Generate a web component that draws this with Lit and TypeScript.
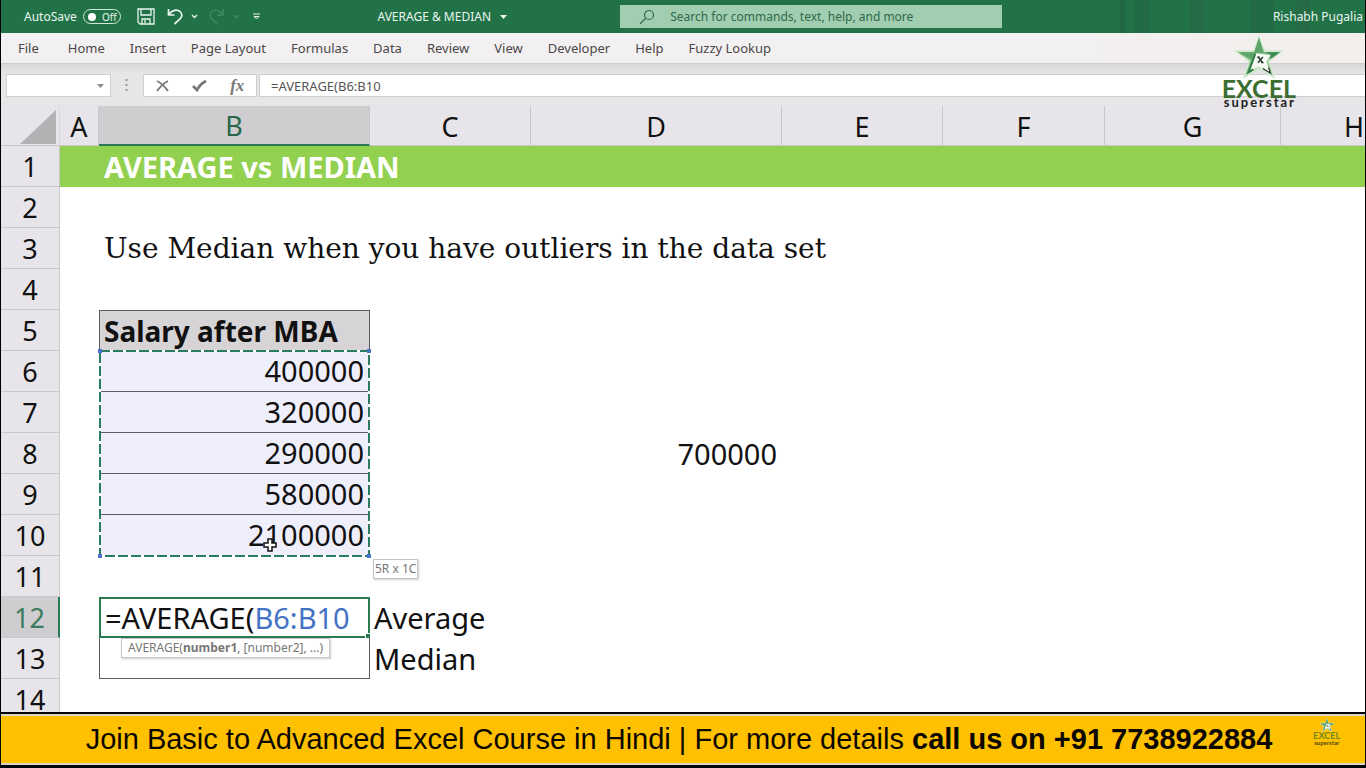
import { LitElement, html, css, svg, nothing } from "lit";
import { customElement, property, state } from "lit/decorators.js";
import { classMap } from "lit/directives/class-map.js";

const TABS = ["File", "Home", "Insert", "Page Layout", "Formulas", "Data", "Review", "View", "Developer", "Help", "Fuzzy Lookup"];
const COLUMNS = ["A", "B", "C", "D", "E", "F", "G", "H"];
const ROWS = Array.from({ length: 14 }, (_, i) => i + 1);
const CELLS: Record<string, string> = {
  B1: "AVERAGE vs MEDIAN",
  B3: "Use Median when you have outliers in the data set",
  B5: "Salary after MBA",
  B6: "400000",
  B7: "320000",
  B8: "290000",
  B9: "580000",
  B10: "2100000",
  D8: "700000",
  C12: "Average",
  C13: "Median",
};

@customElement("brand-logo")
export class BrandLogo extends LitElement {
  @property({ type: Boolean, reflect: true }) small = false;

  static styles = css`
    :host { display: flex; flex-direction: column; align-items: center; font-family: Lato, sans-serif; font-weight: 700; }
    .star { width: 52px; height: 44px; }
    .name { font-size: 25px; line-height: 19px; color: #3c6e31; }
    .sub { font-size: 13px; line-height: 8px; letter-spacing: 2px; color: #222; margin-right: -2px; }
    :host([small]) .star { width: 18px; height: 14px; }
    :host([small]) .name { font-size: 9px; line-height: 8px; color: #718a1c; }
    :host([small]) .sub { font-size: 6px; line-height: 5px; letter-spacing: 0; color: #4e4a10; margin-right: 0; }
  `;

  render() {
    return html`
      <svg class="star" viewBox="0 0 52 46" aria-hidden="true">
        <path d="M26 0 32 16H52L37 28 43 46 26 36 9 46 15 28 0 16H20Z" fill="#cfe8cb" />
        <path d="M26 3 31 18H48L35 27 40 42 26 33 12 42 17 27 4 18H21Z" fill="#7fba84" />
        <path d="M26 3 31 18 22 19 20 26 4 18H21Z" fill="#5fa56a" />
        <path d="M31 18H48L38 25V20Z" fill="#3b8a52" />
        <path d="M23 19 38 21 34 28 38 41 26 33 16 38Z" fill="#f7fbf4" />
        <path d="M22 20 15 39 20 36" fill="none" stroke="#2f7c48" stroke-width="2" />
        <path d="M30 35 38 40 36 34" fill="none" stroke="#26352a" stroke-width="1.2" />
        <path d="M25 23 30 29M30 23 25 29" stroke="#26352a" stroke-width="1.5" />
        <path d="M24 23H27M28 29H31" stroke="#26352a" />
      </svg>
      <span class="name">EXCEL</span>
      <span class="sub">superstar</span>
    `;
  }
}

@customElement("title-bar")
export class TitleBar extends LitElement {
  static styles = css`
    :host {
      display: grid; grid-template-columns: 27.6% 17.8% 28% 1fr; align-items: center; height: 33px; color: #e9f5ee;
      font: 12px "Noto Sans", "Open Sans", sans-serif;
      background:
        linear-gradient(90deg, transparent 0 51%, #1f6842 51% 52%, transparent 52% 54%, #236b45 54% 57%, transparent 57% 65%, #266b46 65% 68%, transparent 68% 77%, #236b45 77% 82%, transparent 82% 86%, #266b46 86% 89%, transparent 89%) right / 500px 100% no-repeat,
        #217347;
    }
    .quick { display: flex; align-items: center; padding-left: 23px; }
    button { all: unset; display: flex; align-items: center; }
    svg { display: block; fill: none; stroke: currentColor; }
    .toggle { gap: 6px; font-size: 12px; }
    .pill { display: flex; align-items: center; gap: 6px; width: 32px; height: 13px; padding-left: 4px; border: 1px solid #cfe6d8; border-radius: 8px; font-size: 10px; }
    .knob { width: 8px; height: 8px; border-radius: 50%; background: #fff; }
    .save { margin-left: 16px; }
    .undo { margin-left: 12px; gap: 7px; }
    .redo { margin-left: 10px; gap: 8px; color: #3f8a62; }
    .more { margin-left: 12px; }
    .doc { gap: 9px; }
    .search { display: flex; align-items: center; gap: 15px; height: 23px; padding-left: 19px; background: #a1cdb1; color: #2f6a4a; }
    input { flex: 1; min-width: 0; border: 0; padding: 0; background: none; font: inherit; color: inherit; outline: 0; }
    input::placeholder { color: #2f6a4a; opacity: 1; }
    .user { justify-self: end; padding-right: 2px; white-space: nowrap; }
  `;

  render() {
    const caret = svg`<path d="M1 1 3.5 3.5 6 1" stroke-width="1.3"/>`;
    return html`
      <div class="quick">
        <button class="toggle" role="switch" aria-checked="false">AutoSave<span class="pill"><span class="knob"></span>Off</span></button>
        <button class="save" aria-label="Save">
          <svg width="18" height="17" viewBox="0 0 18 17" stroke-width="1.3"><path d="M1 1H17V16H3L1 14ZM4 1V7H14V1M5 16V11H13V16M8 12V15" /></svg>
        </button>
        <button class="undo" aria-label="Undo">
          <svg width="17" height="17" viewBox="0 0 17 17" stroke-width="1.7"><path d="M1.500 1V7H7.500M2 6.500C5 2 10 1 13 3.500C16 6.500 15 9 13 11L7.500 16" /></svg>
          <svg width="7" height="5">${caret}</svg>
        </button>
        <button class="redo" aria-label="Redo" disabled>
          <svg width="17" height="17" viewBox="0 0 17 17" stroke-width="1.500"><path d="M15 1V7H9M14.500 6.500C11 2 7 1 4 3.500C1 6.500 2 9 4 11L9 16" /></svg>
          <svg width="7" height="5">${caret}</svg>
        </button>
        <button class="more" aria-label="Customize Quick Access Toolbar">
          <svg width="9" height="7" viewBox="0 0 9 7"><path d="M1 1H8M2 3.500H7L4.500 6Z" /></svg>
        </button>
      </div>
      <button class="doc">AVERAGE &amp; MEDIAN <svg width="7" height="4" viewBox="0 0 7 4"><path d="M0 0H7L3.500 4Z" fill="currentColor" stroke="none" /></svg></button>
      <label class="search">
        <svg width="16" height="16" viewBox="0 0 16 16" stroke-width="1.200"><circle cx="10" cy="6" r="4.500" /><path d="M6.800 9.200 1 15" /></svg>
        <input type="search" aria-label="Search" placeholder="Search for commands, text, help, and more" />
      </label>
      <span class="user">Rishabh Pugalia</span>
    `;
  }
}

@customElement("ribbon-tabs")
export class RibbonTabs extends LitElement {
  static styles = css`
    :host { display: block; background: linear-gradient(90deg, #f3f0f1 80%, #f3efec); border-bottom: 1px solid #cfcccd; }
    nav { display: flex; align-items: center; gap: 1px; height: 30px; padding-left: 5px; }
    a { padding: 0 12px; font: 13px "Noto Sans", "Open Sans", sans-serif; color: #494748; text-decoration: none; white-space: nowrap; }
    a:first-child { margin-right: 4px; }
  `;

  render() {
    return html`<nav>${TABS.map((t) => html`<a href="#">${t}</a>`)}</nav>`;
  }
}

@customElement("formula-bar")
export class FormulaBar extends LitElement {
  @property() formula = "";

  static styles = css`
    :host { display: flex; height: 23px; padding: 10px 0 9px 5px; background: linear-gradient(#d8d6d8, #e7e5e7 9px); font: 13px "Noto Sans", "Open Sans", sans-serif; color: #555; }
    .name { position: relative; width: 105px; flex: none; border: 1px solid #d0ced0; background: #fff; box-sizing: border-box; display: flex; }
    select { appearance: none; flex: 1; border: 0; background: none; font: inherit; }
    .name svg { position: absolute; right: 6px; top: 9px; }
    .grip { margin: 5px 15px 0 14px; }
    .tools { display: flex; flex: none; align-items: center; justify-content: space-around; width: 114px; box-sizing: border-box; border: 1px solid #d0ced0; background: #fff; }
    button { all: unset; display: flex; }
    .fx { font: italic 700 17px/20px "Liberation Serif", serif; color: #777; }
    input { flex: 1; min-width: 0; margin: 0 0 0 2px; padding: 0 0 0 11px; border: 1px solid #d0ced0; border-right: 0; background: #fff; font: inherit; color: inherit; outline: 0; }
  `;

  render() {
    return html`
      <div class="name">
        <select aria-label="Name box"><option></option></select>
        <svg width="7" height="4" aria-hidden="true"><path d="M0 0H7L3.500 4Z" fill="#8a8a8a" /></svg>
      </div>
      <svg class="grip" width="3" height="12" aria-hidden="true"><path d="M1.500 0V12" stroke="#9a9a9a" stroke-width="2" stroke-dasharray="2 3" /></svg>
      <div class="tools">
        <button aria-label="Cancel"><svg width="13" height="12" viewBox="0 0 13 12"><path d="M1 1C5 3 9 7 12 11M12 1C8 3 4 7 1 11" fill="none" stroke="#777" stroke-width="1.900" /></svg></button>
        <button aria-label="Enter"><svg width="15" height="12" viewBox="0 0 15 12"><path d="M1 6 5 10C7 6 10 3 14 1" fill="none" stroke="#777" stroke-width="2.700" /></svg></button>
        <button class="fx" aria-label="Insert function">fx</button>
      </div>
      <input aria-label="Formula" .value=${this.formula} />
    `;
  }
}

@customElement("sheet-grid")
export class SheetGrid extends LitElement {
  @property() active = "B12";
  @property() formula = "";

  static styles = css`
    :host { display: block; flex: 1; min-height: 0; overflow: hidden; background: #fff; --row: 41px; --line: #5b5b62; --accent: #2b7a52; }
    table { border-collapse: separate; border-spacing: 0; table-layout: fixed; width: 1427px; font: 29px/38px "Noto Sans", "Open Sans", sans-serif; color: #111; }
    .w-head { width: 59px; } .w-A { width: 39px; } .w-B { width: 271px; } .w-C { width: 161px; }
    .w-D { width: 251px; } .w-E { width: 161px; } .w-F { width: 162px; } .w-G { width: 176px; } .w-H { width: 147px; }
    tr { height: var(--row); }
    thead tr { height: 40px; }
    th, td { box-sizing: border-box; padding: 0; height: inherit; white-space: nowrap; }
    th { font: 27px/36px "Noto Sans", "Open Sans", sans-serif; background: #e7e5e9; border: 0 solid #c9c7cb; padding-top: 2px; }
    thead th { border-width: 0 1px 1px 0; }
    thead th:first-child { border-right-color: #d8d6d8; }
    tbody th { border-width: 0 1px 1px 0; }
    .corner { display: block; margin: 0 3px 0 auto; }
    thead .picked { background: #cfcdcf; color: #26694a; border-bottom: 2px solid var(--accent); }
    tbody .picked { background: #cfcdcf; color: #3b7d5f; border-right: 2px solid var(--accent); }
    td { position: relative; padding-left: 4px; }
    .banner { background: #92d050; }
    .title { color: #fff; font-weight: 700; padding-left: 5px; }
    .note { font-family: "DejaVu Serif", serif; font-size: 28px; padding-left: 5px; }
    .num { text-align: right; padding: 0 5px 0 0; }
    .box { border: 1px solid var(--line); border-top: 0; }
    .head { background: #d6d4d6; border-top: 1px solid var(--line); font-weight: 700; font-size: 28px; }
    .range { background: #efeffc; line-height: 40px; }
    .ants { position: absolute; left: -1px; top: -1px; width: calc(100% + 2px); height: calc(var(--row) * 5 + 1px); overflow: visible; z-index: 1; pointer-events: none; }
    .edit { border: 2px solid var(--accent); line-height: 37px; }
    .ref { color: #4472c4; }
    .handle { position: absolute; right: -2px; bottom: -2px; width: 4px; height: 4px; background: var(--accent); outline: 1px solid #fff; }
    .tip { position: absolute; z-index: 2; border: 1px solid #c4c4c8; background: #fff; color: #777; font: 12px/18px "Noto Sans", sans-serif; box-shadow: 1px 1px 2px #0003; }
    .hint { left: 20px; top: 39px; padding: 0 6px; }
    .size { left: calc(100% + 4px); top: calc(100% + 4px); padding: 0 1px; }
    .cursor { position: absolute; z-index: 2; left: 163px; bottom: 3px; }
  `;

  private content(ref: string) {
    if (ref === this.active) {
      return html`${this.formula.slice(0, 9)}<span class="ref">${this.formula.slice(9)}</span><span class="handle"></span>
        <span class="tip hint">AVERAGE(<b>number1</b>, [number2], ...)</span>`;
    }
    const text = CELLS[ref] ?? nothing;
    if (ref === "B6") {
      return html`${text}<svg class="ants" aria-hidden="true">
        <rect x="1" y="1" width="269" height="205" fill="none" stroke="#fff" stroke-width="2" />
        <rect x="1" y="1" width="269" height="205" fill="none" stroke="#2b7a62" stroke-width="2" stroke-dasharray="10 3" />
        ${[[-1, -1], [268, -1], [-1, 204], [268, 204]].map(([x, y]) => svg`<rect x=${x} y=${y} width="4" height="4" fill="#4a72c8"/>`)}
      </svg>`;
    }
    if (ref === "B10") {
      return html`${text}<span class="tip size">5R x 1C</span>
        <svg class="cursor" width="14" height="14" viewBox="0 0 14 14" aria-hidden="true"><path d="M5 1H9V5H13V9H9V13H5V9H1V5H5Z" fill="#fff" stroke="#111" stroke-width="1.500" /></svg>`;
    }
    return text;
  }

  private cell(col: string, row: number) {
    const ref = col + row;
    const inB = col === "B";
    const classes = {
      title: ref === "B1",
      note: ref === "B3",
      box: inB && ((row >= 5 && row <= 10) || row === 13),
      head: ref === "B5",
      range: inB && row >= 6 && row <= 10,
      num: /^\d+$/.test(CELLS[ref] ?? ""),
      edit: ref === this.active,
    };
    return html`<td class=${classMap(classes)}>${this.content(ref)}</td>`;
  }

  render() {
    const activeCol = this.active[0];
    const activeRow = Number(this.active.slice(1));
    return html`
      <table>
        <colgroup><col class="w-head" />${COLUMNS.map((c) => html`<col class="w-${c}" />`)}</colgroup>
        <thead><tr>
          <th><svg class="corner" width="36" height="34" aria-label="Select all"><path d="M36 0V34H0Z" fill="#b3b1b3" /></svg></th>
          ${COLUMNS.map((c) => html`<th scope="col" class=${classMap({ picked: c === activeCol })}>${c}</th>`)}
        </tr></thead>
        <tbody>
          ${ROWS.map((r) => html`<tr class=${classMap({ banner: r === 1 })}>
            <th scope="row" class=${classMap({ picked: r === activeRow })}>${r}</th>
            ${COLUMNS.map((c) => this.cell(c, r))}
          </tr>`)}
        </tbody>
      </table>`;
  }
}

@customElement("promo-strip")
export class PromoStrip extends LitElement {
  static styles = css`
    :host { display: block; background: #000; padding: 2px 0 3px; }
    .strip { display: grid; grid-template-columns: 1fr auto 1fr; height: 47px; padding-right: 8px; border: 2px solid #d9d4c4; border-width: 2px 0; background: #ffc000; }
    p { margin: 0; font: 29px/47px "Liberation Sans", Arial, sans-serif; color: #0c0800; grid-column: 2; white-space: nowrap; }
    brand-logo { justify-self: center; margin: 2px 0 0 24px; align-self: start; }
  `;

  render() {
    return html`<div class="strip">
      <p>Join Basic to Advanced Excel Course in Hindi | For more details <b>call us on +91 7738922884</b></p>
      <brand-logo small></brand-logo>
    </div>`;
  }
}

@customElement("app-root")
export class AppRoot extends LitElement {
  @state() private formula = "=AVERAGE(B6:B10";

  static styles = css`
    :host { position: relative; display: flex; flex-direction: column; box-sizing: border-box; height: 100vh; overflow: hidden; border: 0 solid #000; border-width: 0 1px; background: #e7e5e7; }
    .mark { position: absolute; right: 69px; top: 35px; }
  `;

  render() {
    return html`
      <title-bar></title-bar>
      <ribbon-tabs></ribbon-tabs>
      <formula-bar .formula=${this.formula}></formula-bar>
      <sheet-grid .formula=${this.formula}></sheet-grid>
      <promo-strip></promo-strip>
      <brand-logo class="mark"></brand-logo>
    `;
  }
}
